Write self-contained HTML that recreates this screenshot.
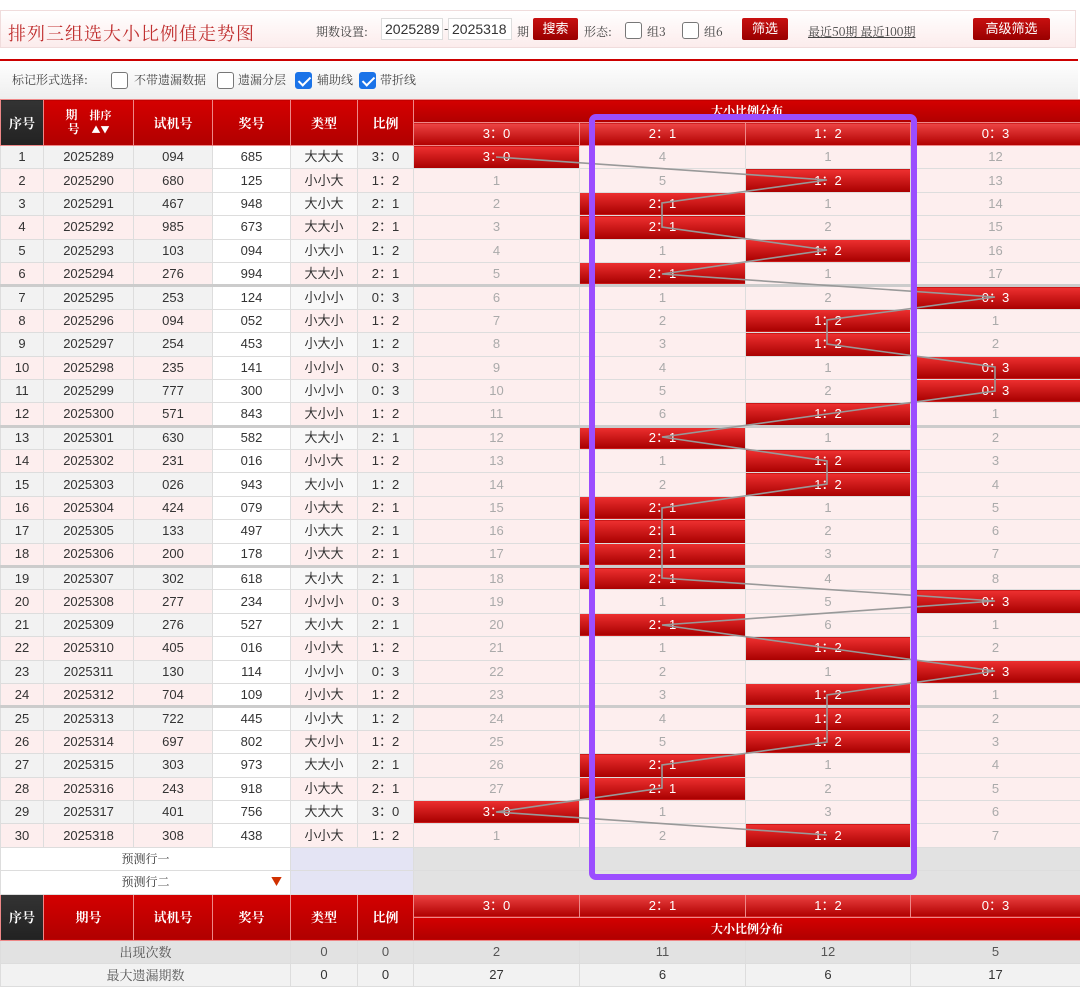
<!DOCTYPE html>
<html><head><meta charset="utf-8"><style>
*{margin:0;padding:0;box-sizing:border-box}
body{width:1080px;height:974px;overflow:hidden;background:#fff;font-family:"Liberation Sans","Noto Sans CJK SC",sans-serif;font-size:13px;color:#333;position:relative}
.top{position:absolute;left:0;top:10px;width:1076px;height:38px;background:linear-gradient(#fff,#fcecec);border:1px solid #f0dcdc}
.title{position:absolute;left:7px;top:9px;font-family:"Noto Serif CJK SC",serif;font-size:18px;color:#c03030;letter-spacing:1px}
.lab{position:absolute;top:12px;font-size:12px;color:#444;font-family:"Noto Serif CJK SC",serif}
.inp{position:absolute;top:7px;height:22px;border:1px solid #ddd;background:#fff;font-size:14px;padding:2px 3px}
.btn{position:absolute;top:7px;height:22px;background:linear-gradient(#c81010,#990000);color:#fff;font-size:13px;text-align:center;line-height:22px;border-radius:2px}
.cb{position:absolute;width:17px;height:17px;border:1px solid #777;border-radius:3px;background:#fff}
.cb.on{background:#1a73e8;border-color:#1a73e8}
.cb.on:after{content:"";position:absolute;left:5px;top:1px;width:5px;height:10px;border:solid #fff;border-width:0 2px 2px 0;transform:rotate(45deg)}
.redline{position:absolute;left:0;top:59px;width:1078px;height:2px;background:#c00}
.opt{position:absolute;left:0;top:61px;width:1078px;height:38px;background:linear-gradient(#fff,#eee)}
table{position:absolute;left:0;border-collapse:collapse;table-layout:fixed;width:1080px}
td,th{border:1px solid #ddd;text-align:center;white-space:nowrap;overflow:hidden;font-weight:normal;line-height:14px;padding:0}
th{background:linear-gradient(#d40000,#b00000);color:#fff;font-family:"Noto Serif CJK SC",serif;font-weight:bold;font-size:13px;border-color:#e88}
th.k{background:linear-gradient(#333,#222)}
th.s{background:linear-gradient(#ee4444,#b00000);font-weight:normal;font-family:"Liberation Sans",sans-serif;font-size:13px}
#main td{height:23.4px;font-size:13px}
tr.o td{background:#f2f2f2}
tr.e td{background:#fdeeee}
tr td.w{background:#fff}
tr.o td.t{background:#f8f8f8}
td.d{background:#fdeeee!important;color:#aaa;font-size:12px}
td.h{background:linear-gradient(#ee3030,#a80000)!important;color:#fff;font-size:13px}
tr.g td{border-top:3px solid #ccc}
</style></head><body>
<div class="top">
<div class="title">排列三组选大小比例值走势图</div>
<div class="lab" style="left:315px">期数设置:</div>
<div class="inp" style="left:380px;width:62px">2025289</div>
<div style="position:absolute;left:443px;top:10px">-</div>
<div class="inp" style="left:447px;width:64px">2025318</div>
<div class="lab" style="left:516px">期</div>
<div class="btn" style="left:532px;width:45px">搜索</div>
<div class="lab" style="left:583px">形态:</div>
<div class="cb" style="left:624px;top:11px"></div><div class="lab" style="left:646px">组3</div>
<div class="cb" style="left:681px;top:11px"></div><div class="lab" style="left:703px">组6</div>
<div class="btn" style="left:741px;width:46px">筛选</div>
<div class="lab" style="left:807px;text-decoration:underline">最近50期 最近100期</div>
<div class="btn" style="left:972px;width:77px">高级筛选</div>
</div>
<div class="redline"></div>
<div class="opt">
<div class="lab" style="left:12px;top:10px">标记形式选择:</div>
<div class="cb" style="left:111px;top:11px"></div><div class="lab" style="left:134px;top:10px">不带遗漏数据</div>
<div class="cb" style="left:217px;top:11px"></div><div class="lab" style="left:238px;top:10px">遗漏分层</div>
<div class="cb on" style="left:295px;top:11px"></div><div class="lab" style="left:317px;top:10px">辅助线</div>
<div class="cb on" style="left:359px;top:11px"></div><div class="lab" style="left:380px;top:10px">带折线</div>
</div>

<table id="main" style="top:99px">
<colgroup><col style="width:43px"><col style="width:90px"><col style="width:79px"><col style="width:78px"><col style="width:67px"><col style="width:56px"><col style="width:166px"><col style="width:166px"><col style="width:165px"><col style="width:170px"></colgroup>
<tr style="height:23px"><th class="k" rowspan="2">序号</th><th rowspan="2" style="font-size:12px">期　<span style="font-size:11px">排序</span><br>号　<span style="font-size:9px">▲▼</span></th><th rowspan="2">试机号</th><th rowspan="2">奖号</th><th rowspan="2">类型</th><th rowspan="2">比例</th><th colspan="4" style="font-size:12px;height:23px">大小比例分布</th></tr>
<tr style="height:23px"><th class="s">3：0</th><th class="s">2：1</th><th class="s">1：2</th><th class="s">0：3</th></tr>
<tr class="o"><td>1</td><td>2025289</td><td>094</td><td class="w">685</td><td class="t">大大大</td><td>3：0</td><td class="h">3：0</td><td class="d">4</td><td class="d">1</td><td class="d">12</td></tr>
<tr class="e"><td>2</td><td>2025290</td><td>680</td><td class="w">125</td><td>小小大</td><td>1：2</td><td class="d">1</td><td class="d">5</td><td class="h">1：2</td><td class="d">13</td></tr>
<tr class="o"><td>3</td><td>2025291</td><td>467</td><td class="w">948</td><td class="t">大小大</td><td>2：1</td><td class="d">2</td><td class="h">2：1</td><td class="d">1</td><td class="d">14</td></tr>
<tr class="e"><td>4</td><td>2025292</td><td>985</td><td class="w">673</td><td>大大小</td><td>2：1</td><td class="d">3</td><td class="h">2：1</td><td class="d">2</td><td class="d">15</td></tr>
<tr class="o"><td>5</td><td>2025293</td><td>103</td><td class="w">094</td><td class="t">小大小</td><td>1：2</td><td class="d">4</td><td class="d">1</td><td class="h">1：2</td><td class="d">16</td></tr>
<tr class="e"><td>6</td><td>2025294</td><td>276</td><td class="w">994</td><td>大大小</td><td>2：1</td><td class="d">5</td><td class="h">2：1</td><td class="d">1</td><td class="d">17</td></tr>
<tr class="o g"><td>7</td><td>2025295</td><td>253</td><td class="w">124</td><td class="t">小小小</td><td>0：3</td><td class="d">6</td><td class="d">1</td><td class="d">2</td><td class="h">0：3</td></tr>
<tr class="e"><td>8</td><td>2025296</td><td>094</td><td class="w">052</td><td>小大小</td><td>1：2</td><td class="d">7</td><td class="d">2</td><td class="h">1：2</td><td class="d">1</td></tr>
<tr class="o"><td>9</td><td>2025297</td><td>254</td><td class="w">453</td><td class="t">小大小</td><td>1：2</td><td class="d">8</td><td class="d">3</td><td class="h">1：2</td><td class="d">2</td></tr>
<tr class="e"><td>10</td><td>2025298</td><td>235</td><td class="w">141</td><td>小小小</td><td>0：3</td><td class="d">9</td><td class="d">4</td><td class="d">1</td><td class="h">0：3</td></tr>
<tr class="o"><td>11</td><td>2025299</td><td>777</td><td class="w">300</td><td class="t">小小小</td><td>0：3</td><td class="d">10</td><td class="d">5</td><td class="d">2</td><td class="h">0：3</td></tr>
<tr class="e"><td>12</td><td>2025300</td><td>571</td><td class="w">843</td><td>大小小</td><td>1：2</td><td class="d">11</td><td class="d">6</td><td class="h">1：2</td><td class="d">1</td></tr>
<tr class="o g"><td>13</td><td>2025301</td><td>630</td><td class="w">582</td><td class="t">大大小</td><td>2：1</td><td class="d">12</td><td class="h">2：1</td><td class="d">1</td><td class="d">2</td></tr>
<tr class="e"><td>14</td><td>2025302</td><td>231</td><td class="w">016</td><td>小小大</td><td>1：2</td><td class="d">13</td><td class="d">1</td><td class="h">1：2</td><td class="d">3</td></tr>
<tr class="o"><td>15</td><td>2025303</td><td>026</td><td class="w">943</td><td class="t">大小小</td><td>1：2</td><td class="d">14</td><td class="d">2</td><td class="h">1：2</td><td class="d">4</td></tr>
<tr class="e"><td>16</td><td>2025304</td><td>424</td><td class="w">079</td><td>小大大</td><td>2：1</td><td class="d">15</td><td class="h">2：1</td><td class="d">1</td><td class="d">5</td></tr>
<tr class="o"><td>17</td><td>2025305</td><td>133</td><td class="w">497</td><td class="t">小大大</td><td>2：1</td><td class="d">16</td><td class="h">2：1</td><td class="d">2</td><td class="d">6</td></tr>
<tr class="e"><td>18</td><td>2025306</td><td>200</td><td class="w">178</td><td>小大大</td><td>2：1</td><td class="d">17</td><td class="h">2：1</td><td class="d">3</td><td class="d">7</td></tr>
<tr class="o g"><td>19</td><td>2025307</td><td>302</td><td class="w">618</td><td class="t">大小大</td><td>2：1</td><td class="d">18</td><td class="h">2：1</td><td class="d">4</td><td class="d">8</td></tr>
<tr class="e"><td>20</td><td>2025308</td><td>277</td><td class="w">234</td><td>小小小</td><td>0：3</td><td class="d">19</td><td class="d">1</td><td class="d">5</td><td class="h">0：3</td></tr>
<tr class="o"><td>21</td><td>2025309</td><td>276</td><td class="w">527</td><td class="t">大小大</td><td>2：1</td><td class="d">20</td><td class="h">2：1</td><td class="d">6</td><td class="d">1</td></tr>
<tr class="e"><td>22</td><td>2025310</td><td>405</td><td class="w">016</td><td>小小大</td><td>1：2</td><td class="d">21</td><td class="d">1</td><td class="h">1：2</td><td class="d">2</td></tr>
<tr class="o"><td>23</td><td>2025311</td><td>130</td><td class="w">114</td><td class="t">小小小</td><td>0：3</td><td class="d">22</td><td class="d">2</td><td class="d">1</td><td class="h">0：3</td></tr>
<tr class="e"><td>24</td><td>2025312</td><td>704</td><td class="w">109</td><td>小小大</td><td>1：2</td><td class="d">23</td><td class="d">3</td><td class="h">1：2</td><td class="d">1</td></tr>
<tr class="o g"><td>25</td><td>2025313</td><td>722</td><td class="w">445</td><td class="t">小小大</td><td>1：2</td><td class="d">24</td><td class="d">4</td><td class="h">1：2</td><td class="d">2</td></tr>
<tr class="e"><td>26</td><td>2025314</td><td>697</td><td class="w">802</td><td>大小小</td><td>1：2</td><td class="d">25</td><td class="d">5</td><td class="h">1：2</td><td class="d">3</td></tr>
<tr class="o"><td>27</td><td>2025315</td><td>303</td><td class="w">973</td><td class="t">大大小</td><td>2：1</td><td class="d">26</td><td class="h">2：1</td><td class="d">1</td><td class="d">4</td></tr>
<tr class="e"><td>28</td><td>2025316</td><td>243</td><td class="w">918</td><td>小大大</td><td>2：1</td><td class="d">27</td><td class="h">2：1</td><td class="d">2</td><td class="d">5</td></tr>
<tr class="o"><td>29</td><td>2025317</td><td>401</td><td class="w">756</td><td class="t">大大大</td><td>3：0</td><td class="h">3：0</td><td class="d">1</td><td class="d">3</td><td class="d">6</td></tr>
<tr class="e"><td>30</td><td>2025318</td><td>308</td><td class="w">438</td><td>小小大</td><td>1：2</td><td class="d">1</td><td class="d">2</td><td class="h">1：2</td><td class="d">7</td></tr>
<tr><td colspan="4" style="background:#fff;font-family:'Noto Serif CJK SC',serif;font-size:12px">预测行一</td><td colspan="2" style="background:#e4e4f4"></td><td colspan="4" style="background:#e2e2e2"></td></tr>
<tr><td colspan="4" style="background:#fff;font-family:'Noto Serif CJK SC',serif;font-size:12px;position:relative">预测行二<span style="position:absolute;left:270px;top:3px;color:#d03000;font-size:11px">▼</span></td><td colspan="2" style="background:#e4e4f4"></td><td colspan="4" style="background:#e2e2e2"></td></tr>
<tr style="height:23px"><th class="k" rowspan="2">序号</th><th rowspan="2">期号</th><th rowspan="2">试机号</th><th rowspan="2">奖号</th><th rowspan="2">类型</th><th rowspan="2">比例</th><th class="s">3：0</th><th class="s">2：1</th><th class="s">1：2</th><th class="s">0：3</th></tr>
<tr style="height:23px"><th colspan="4" style="font-size:12px">大小比例分布</th></tr>
<tr style="height:22px"><td colspan="4" style="background:#e2e2e2;font-family:'Noto Serif CJK SC',serif;color:#555">出现次数</td><td style="background:#e2e2e2;color:#555">0</td><td style="background:#e2e2e2;color:#555">0</td><td style="background:#e2e2e2;color:#555">2</td><td style="background:#e2e2e2;color:#555">11</td><td style="background:#e2e2e2;color:#555">12</td><td style="background:#e2e2e2;color:#555">5</td></tr>
<tr style="height:22px"><td colspan="4" style="background:#f2f2f2;font-family:'Noto Serif CJK SC',serif;color:#555">最大遗漏期数</td><td style="background:#f2f2f2">0</td><td style="background:#f2f2f2">0</td><td style="background:#f2f2f2">27</td><td style="background:#f2f2f2">6</td><td style="background:#f2f2f2">6</td><td style="background:#f2f2f2">17</td></tr>
</table>

<svg style="position:absolute;left:0;top:0" width="1080" height="974">
<polyline fill="none" stroke="#999" stroke-width="1.6" points="496,157 827,180 662,203 662,227 827,250 662,274 995,297 827,320 827,344 995,367 995,391 827,414 662,437 827,461 827,484 662,508 662,531 662,554 662,578 995,601 662,625 827,648 995,671 827,695 827,718 827,742 662,765 662,788 496,812 827,835"/>
<rect x="592" y="117" width="322" height="760" rx="4" fill="none" stroke="#9b4dff" stroke-width="6"/>
</svg>
</body></html>
